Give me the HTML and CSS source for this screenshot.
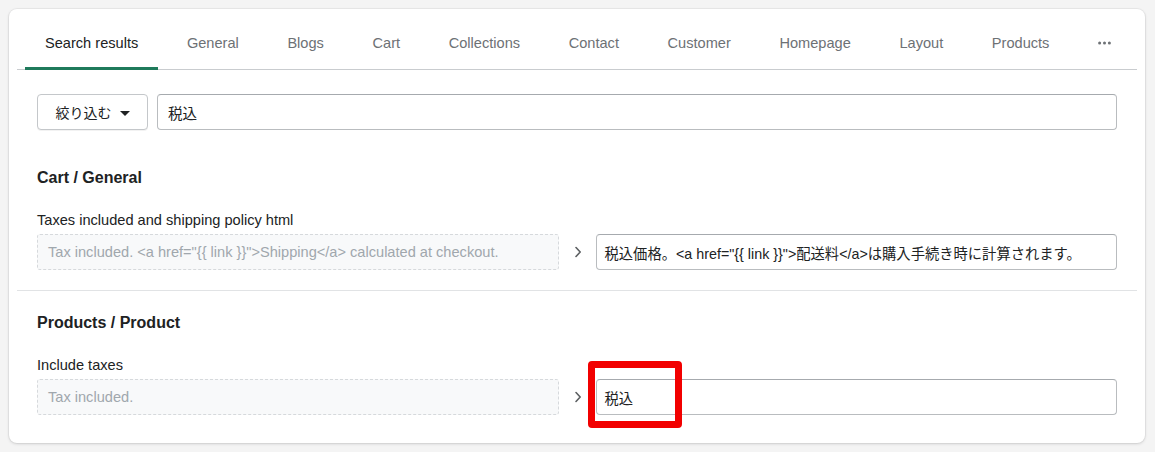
FILE: index.html
```html
<!DOCTYPE html>
<html lang="ja">
<head>
  <meta charset="UTF-8">
  <meta name="viewport" content="width=device-width, initial-scale=1.0">
  <title>Translations - Search results</title>
  <link rel="stylesheet" href="styles.css">
</head>
<body>
  <div class="card">
    <ul class="tabs">
      <li class="tab active">Search results</li>
      <li class="tab">General</li>
      <li class="tab">Blogs</li>
      <li class="tab">Cart</li>
      <li class="tab">Collections</li>
      <li class="tab">Contact</li>
      <li class="tab">Customer</li>
      <li class="tab">Homepage</li>
      <li class="tab">Layout</li>
      <li class="tab">Products</li>
      <li class="tab more">
        <svg width="13" height="4" viewBox="0 0 13 4"><circle cx="1.6" cy="2" r="1.5"/><circle cx="6.5" cy="2" r="1.5"/><circle cx="11.4" cy="2" r="1.5"/></svg>
      </li>
    </ul>

    <div class="filter-bar">
      <button class="filter-btn">絞り込む <span class="caret"></span></button>
      <div class="text-field">税込</div>
    </div>

    <div class="section">
      <h2>Cart / General</h2>
      <p class="label">Taxes included and shipping policy html</p>
      <div class="row">
        <div class="source">Tax included. &lt;a href="{{ link }}"&gt;Shipping&lt;/a&gt; calculated at checkout.</div>
        <div class="arrow">
          <svg width="8" height="12" viewBox="0 0 8 12"><path d="M2 1.5 6.2 6 2 10.5" fill="none" stroke="#5c5f62" stroke-width="1.6" stroke-linecap="round" stroke-linejoin="round"/></svg>
        </div>
        <div class="target">
          <div class="text-field">税込価格。&lt;a href="{{ link }}"&gt;配送料&lt;/a&gt;は購入手続き時に計算されます。</div>
        </div>
      </div>
    </div>

    <div class="section">
      <h2>Products / Product</h2>
      <p class="label">Include taxes</p>
      <div class="row">
        <div class="source">Tax included.</div>
        <div class="arrow">
          <svg width="8" height="12" viewBox="0 0 8 12"><path d="M2 1.5 6.2 6 2 10.5" fill="none" stroke="#5c5f62" stroke-width="1.6" stroke-linecap="round" stroke-linejoin="round"/></svg>
        </div>
        <div class="target">
          <div class="text-field">税込</div>
          <span class="highlight"></span>
        </div>
      </div>
    </div>
  </div>
</body>
</html>
```

FILE: styles.css
```css
* {
  margin: 0;
  padding: 0;
  box-sizing: border-box;
}

body {
  font-family: 'Liberation Sans', 'Noto Sans CJK JP', sans-serif;
  font-size: 14.6px;
  color: #202223;
  background-color: #f4f4f4;
  padding: 9px 10px 9px 9px;
}

.card {
  background-color: #ffffff;
  border-radius: 8px;
  padding: 8px;
  box-shadow: 0 0 0 1px rgba(63, 63, 68, 0.05), 0 1px 3px rgba(63, 63, 68, 0.18);
}

/* Tabs */
.tabs {
  list-style: none;
  display: flex;
  gap: 8.6px;
  padding-left: 8px;
  height: 53px;
  border-bottom: 1px solid #c9cccf;
}

.tab {
  display: flex;
  align-items: center;
  padding: 1px 20px 0;
  font-size: 14.6px;
  color: #6d7175;
  border-bottom: 3px solid transparent;
  border-radius: 3px 3px 0 0;
  margin-bottom: -1px;
}

.tab.active {
  color: #202223;
  border-bottom-color: #1f7a5b;
}

.tab.more svg {
  fill: #6d7175;
}

/* Filter */
.filter-bar {
  display: flex;
  gap: 9px;
  padding: 24px 20px 16px;
}

.filter-btn {
  width: 111px;
  height: 36px;
  flex-shrink: 0;
  display: flex;
  align-items: center;
  justify-content: center;
  gap: 8px;
  font-family: inherit;
  font-size: 14px;
  color: #202223;
  background-color: #ffffff;
  border: 1px solid #c4c7ca;
  border-radius: 4px;
  box-shadow: 0 1px 0 rgba(0, 0, 0, 0.05);
}

.caret {
  width: 0;
  height: 0;
  border-left: 5px solid transparent;
  border-right: 5px solid transparent;
  border-top: 5px solid #202223;
  margin-top: 2px;
}

.text-field {
  flex-grow: 1;
  height: 36px;
  display: flex;
  align-items: center;
  padding: 0 10px;
  background-color: #ffffff;
  border: 1px solid #b9bcbf;
  border-top-color: #a6aaae;
  border-radius: 4px;
  white-space: nowrap;
  overflow: hidden;
}

.target .text-field {
  padding: 0 8px;
  font-size: 14.3px;
}

/* Sections */
.section {
  padding: 20px;
}

.section + .section {
  border-top: 1px solid #e1e3e5;
}

.section h2 {
  font-size: 16px;
  font-weight: bold;
  line-height: 24px;
  margin-bottom: 20px;
}

.label {
  line-height: 20px;
  margin-bottom: 4px;
}

.row {
  display: grid;
  grid-template-columns: 1fr 37px 1fr;
  align-items: center;
}

.source {
  height: 36px;
  display: flex;
  align-items: center;
  padding: 0 10px;
  color: #a0a7ad;
  background-color: #f8f9fa;
  border: 1px dashed #d6d9dc;
  border-radius: 3px;
  white-space: nowrap;
  overflow: hidden;
}

.arrow {
  display: flex;
  justify-content: center;
  padding-left: 2px;
}

.target {
  position: relative;
  display: flex;
}

/* Annotation over the translated value */
.highlight {
  position: absolute;
  left: -8px;
  top: -18px;
  width: 94px;
  height: 67px;
  border: 7px solid #f20000;
  border-radius: 4px;
}
```
